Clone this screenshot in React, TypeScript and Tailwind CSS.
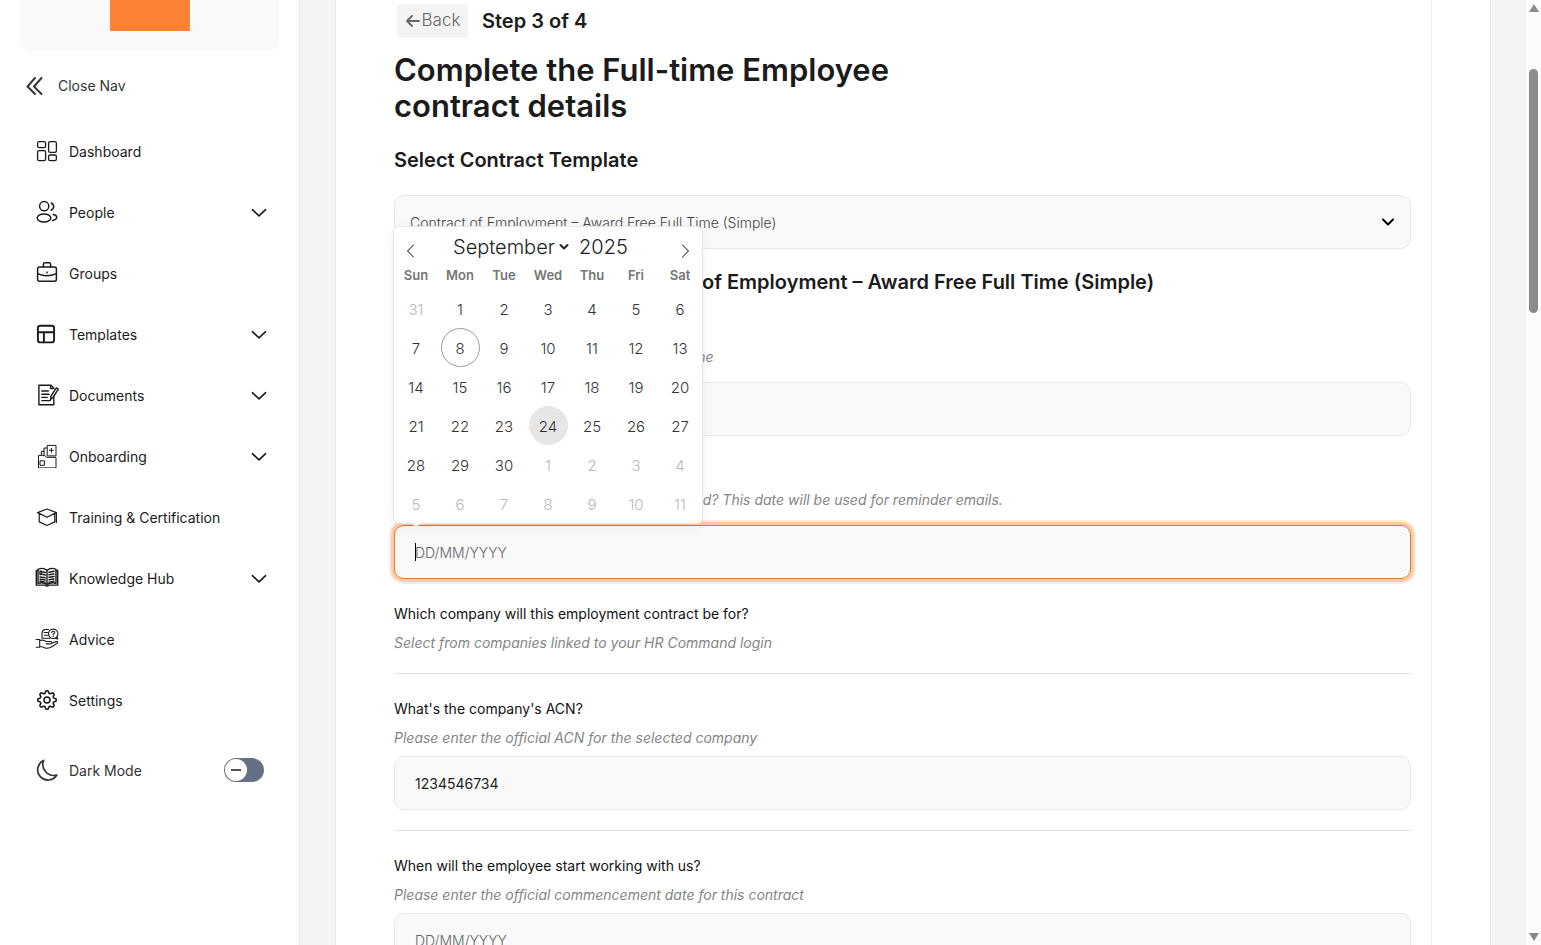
import type { ReactNode } from "react";

const line = {
  fill: "none",
  stroke: "currentColor",
  strokeLinecap: "round" as const,
  strokeLinejoin: "round" as const,
};

function Icon({ width = 1.3, children }: { width?: number; children: ReactNode }) {
  return (
    <svg className="size-6 shrink-0" viewBox="0 0 24 24" strokeWidth={width} aria-hidden="true" {...line}>
      {children}
    </svg>
  );
}

function gearPath(cx: number, cy: number, teeth: number) {
  const points: string[] = [];
  for (let i = 0; i < 160; i++) {
    const a = (i / 160) * Math.PI * 2;
    const r = 8.1 + 1.2 * Math.tanh(1.8 * Math.cos(teeth * a));
    points.push(`${(cx + r * Math.cos(a)).toFixed(2)} ${(cy + r * Math.sin(a)).toFixed(2)}`);
  }
  return `M${points.join("L")}Z`;
}

const icons: Record<string, ReactNode> = {
  Dashboard: (
    <Icon>
      <rect x="2.6" y="2.6" width="8" height="6" rx="1.6" />
      <rect x="13.6" y="2.6" width="7.8" height="10.8" rx="1.6" />
      <rect x="2.6" y="11.6" width="8" height="10" rx="1.6" />
      <rect x="13.6" y="16" width="7.8" height="5.6" rx="1.6" />
    </Icon>
  ),
  People: (
    <Icon width={1.5}>
      <circle cx="9.2" cy="6.2" r="4.6" />
      <ellipse cx="9" cy="18" rx="6.8" ry="4.1" />
      <path d="M16.2 3a3.9 3.9 0 0 1 0 7.2M18.2 14.4c4.8.9 4.8 4.8-.6 6.2" />
    </Icon>
  ),
  Groups: (
    <Icon width={1.5}>
      <rect x="2.6" y="6" width="18.8" height="14.2" rx="2" />
      <path d="M8.4 6V3.4Q8.4 1.8 10 1.8h4q1.6 0 1.6 1.6V6M2.6 12.6q9.4 4.2 18.8 0" />
      <circle cx="12" cy="11.5" r=".3" />
    </Icon>
  ),
  Templates: (
    <Icon width={1.9}>
      <rect x="2.9" y="3.8" width="16.2" height="16.6" rx="2.4" />
      <path d="M3 10.3h16M8.9 10.3v10" />
    </Icon>
  ),
  Documents: (
    <Icon width={1.4}>
      <path d="M18.8 14v7.8H3.9V2.3h12l2.9 3" />
      <path d="M15.5 2.5v3h3M6.8 8h6.5M6.8 11.2h7.2M6.8 14.4h5.5M6.8 17.6h8.5" />
      <path d="M16 13.2l5.3-8.3 2 1.3-5.3 8.3-2.4 2z" />
    </Icon>
  ),
  Onboarding: (
    <Icon width={1}>
      <path d="M3.5 23.5V11.3h6.2l1.8 2h9.5v10.2zM5.4 16.8h4v4.5h-4zM12.2 11.5V1.4h8.8v10.1zM16.4 4.3v4M14.4 6.3h4M12 4H9v7.3M9 7.3H6.3v4" />
    </Icon>
  ),
  "Training & Certification": (
    <Icon width={1.2}>
      <path d="M12 4l9.4 3.6-9.4 4.7-9.4-4.7zM4.2 8.8v8.1l7.8 3.6 7.8-3.6V8.8M21.4 7.6v9.8" />
    </Icon>
  ),
  "Knowledge Hub": (
    <Icon width={1.4}>
      <path d="M3 3.3C6 1.9 9.5 2.2 12 4.4c2.5-2.2 6-2.5 9-1.1v14c-3-.8-6.5-.6-9 1.2-2.5-1.8-6-2-9-1.2zM12 4.4v14" />
      <path d="M3 4.5H1.3v14.6h8.5q2.2 2 4.4 0h8.5V4.5H21M5 5.3h1.8v3.2H5zM8.3 6l2 .5M8.3 8.5l2 .5M5 11l5.2.8M5 13.2l5.2.8M5 15.3l5.2.8M19 5.3l-5 1M19 8l-5 .8M19 10.5l-5 .8M19 13l-5 .8M19 15.3l-5 .8" />
    </Icon>
  ),
  Advice: (
    <Icon width={1.1}>
      <circle cx="18.2" cy="6.8" r="4.7" />
      <path d="M22 10l.8 2-2.5-.8M13.5 2.5H10q-3 .8-3 4v4.8h8M9.2 5.5h3.5M9.2 8.3h3.5M16.7 5.6q.2-1.4 1.5-1.4 1.6 0 1.5 1.4 0 .8-1.5 1.5v.9M18.2 9.3v.2" />
      <path d="M1.2 12.5h3.5v7.8H1.2M4.7 13.6c3-1.2 4.6-.5 6.5.9h4.2q1.6.2 1.4 1.4-.2 1-1.6 1h-4M16.6 16l5-1.4q1.5.1.9 1.5L15.8 20.2q-3.3 1.8-6.3.6l-2.3-1H4.7" />
    </Icon>
  ),
  Settings: (
    <Icon width={1.6}>
      <path d={gearPath(12, 12, 8)} />
      <circle cx="12" cy="12" r="3" />
    </Icon>
  ),
};

const nav = [
  { name: "Dashboard" },
  { name: "People", menu: true },
  { name: "Groups" },
  { name: "Templates", menu: true },
  { name: "Documents", menu: true },
  { name: "Onboarding", menu: true },
  { name: "Training & Certification" },
  { name: "Knowledge Hub", menu: true },
  { name: "Advice" },
  { name: "Settings" },
];

function Sidebar() {
  return (
    <aside className="w-[300px] shrink-0 border-r border-[#e6e6e6] bg-white px-5 text-[#1b1b1b]">
      <div className="flex justify-center rounded-b-[10px] bg-[#f9f9f9] pb-5">
        <div className="h-[31px] w-20 bg-[#ff8133]" />
      </div>
      <button className="mt-[22px] flex h-6 items-center gap-[14px] pl-1 text-[14px] text-[#333]">
        <svg className="size-5" viewBox="0 0 20 20" strokeWidth="1.9" aria-hidden="true" {...line}>
          <path d="M11 3L3.5 11.5 11 19M17.5 3L10 11.5l7.5 7.5" />
        </svg>
        Close Nav
      </button>
      <nav className="mt-6">
        <ul className="flex flex-col gap-px">
          {nav.map((item) => (
            <li key={item.name}>
              <a href="#" className="flex h-[60px] items-center gap-[10px] pr-3 pl-[15px] text-[14px]">
                {icons[item.name]}
                <span className="flex-1">{item.name}</span>
                {item.menu && (
                  <svg className="h-4 w-4" viewBox="0 0 16 16" strokeWidth="1.6" aria-hidden="true" {...line}>
                    <path d="M1.4 5.7L8 11.9l6.6-6.2" />
                  </svg>
                )}
              </a>
            </li>
          ))}
        </ul>
      </nav>
      <label className="mt-7 flex h-6 items-center gap-[10px] pr-[15px] pl-[15px] text-[14px] text-[#333]">
        <Icon width={1.7}>
          <path d="M8.6 2.4A10.3 10.3 0 1 0 21.800 17 11 11 0 0 1 8.6 2.4Z" />
        </Icon>
        <span className="flex-1">Dark Mode</span>
        <input type="checkbox" role="switch" className="peer sr-only" />
        <span className="flex h-6 w-10 rounded-full bg-[#667085] p-px peer-checked:justify-end">
          <span className="flex size-[22px] items-center justify-center rounded-full bg-white">
            <span className="h-[2px] w-[10px] bg-[#555]" />
          </span>
        </span>
      </label>
    </aside>
  );
}

const weekdays = ["Sun", "Mon", "Tue", "Wed", "Thu", "Fri", "Sat"];
const days = [
  { n: 31, other: true },
  ...Array.from({ length: 30 }, (_, i) => ({ n: i + 1, other: false })),
  ...Array.from({ length: 11 }, (_, i) => ({ n: i + 1, other: true })),
];

function dayClass(day: { n: number; other: boolean }) {
  if (day.other) return "border-transparent text-[#b8b8b8]";
  if (day.n === 8) return "border-[#959ea9] text-[#333]";
  if (day.n === 24) return "border-[#e6e6e6] bg-[#e6e6e6] text-[#333]";
  return "border-transparent text-[#333]";
}

function Calendar() {
  return (
    <div className="absolute bottom-full left-0 z-10 mb-[2px] w-[308px] rounded-[5px] bg-white shadow-[0_0_0_1px_#e6e6e6,0_3px_13px_rgba(0,0,0,0.08)]">
      <div className="flex h-[34px] items-center justify-between px-[10px]">
        <button aria-label="Previous month" className="pt-[14px]">
          <svg className="h-[14px] w-[14px]" viewBox="0 0 14 14" strokeWidth="1" aria-hidden="true" {...line}>
            <path d="M9.5 1L3.5 7l6 6" />
          </svg>
        </button>
        <div className="flex items-center gap-[10px] pt-[6px] text-[20px] font-light text-[#222]">
          <div className="relative">
            <select aria-label="Month" defaultValue="September" className="appearance-none pr-[14px]">
              <option>September</option>
              <option>October</option>
            </select>
            <svg className="pointer-events-none absolute top-[11px] right-0 h-2 w-[10px]" viewBox="0 0 10 8" strokeWidth="2" aria-hidden="true" {...line}>
              <path d="M1.5 2L5 5.5 8.5 2" />
            </svg>
          </div>
          <input aria-label="Year" defaultValue="2025" className="w-16 bg-transparent" />
        </div>
        <button aria-label="Next month" className="pt-[14px]">
          <svg className="h-[14px] w-[14px]" viewBox="0 0 14 14" strokeWidth="1" aria-hidden="true" {...line}>
            <path d="M4.5 1l6 6-6 6" />
          </svg>
        </button>
      </div>
      <div className="grid h-7 grid-cols-7 items-center pt-[2px] text-center text-[13px] font-semibold text-[#757575]">
        {weekdays.map((d) => (
          <span key={d}>{d}</span>
        ))}
      </div>
      <div className="grid grid-cols-7 justify-items-center">
        {days.map((day, i) => (
          <button key={i} className={`size-[39px] rounded-full border pt-[3px] text-[15px] font-light ${dayClass(day)}`}>
            {day.n}
          </button>
        ))}
      </div>
      <span className="absolute top-full left-[17px] border-x-[5px] border-t-[4px] border-x-transparent border-t-white" />
    </div>
  );
}

const box = "h-[54px] w-full rounded-[10px] border bg-[#f9f9f9] px-5 text-[14px] text-[#222] outline-none placeholder:font-light placeholder:text-[#666]";

type FieldProps = {
  id: string;
  label: string;
  hint: string;
  value?: string;
  placeholder?: string;
  active?: boolean;
  input?: boolean;
  spaced?: boolean;
};

function Field({ id, label, hint, value, placeholder, active, input = true, spaced }: FieldProps) {
  return (
    <div>
      <label htmlFor={input ? id : undefined} className="block text-[14px] leading-6 text-[#111]">
        {label}
      </label>
      <p className="mt-[5px] text-[14px] leading-6 text-[#858585] italic">{hint}</p>
      {input && (
        <div className={`relative ${spaced ? "mt-[13px]" : "mt-[6px]"}`}>
          <input
            id={id}
            defaultValue={value}
            placeholder={placeholder}
            className={`${box} ${active ? "border-[#de7c3c] shadow-[0_0_0_3px_#ffcba6,0_0_0_5px_#ffeadb]" : "border-[#e9e9e9]"}`}
          />
          {active && <span className="absolute top-[18px] left-[21px] h-[18px] w-px bg-black" />}
          {active && <Calendar />}
        </div>
      )}
    </div>
  );
}

export default function App() {
  return (
    <div className="flex h-screen overflow-hidden bg-[#f4f4f4] font-['Inter','Liberation_Sans',sans-serif]">
      <Sidebar />
      <main className="min-w-0 flex-1 px-[35px]">
        <div className="min-h-full border-x border-[#e9e9e9] bg-white pr-[58px] pl-[58px]">
          <div className="border-r border-[#ececec] pt-1 pr-5">
            <div className="flex items-center gap-[14px] pl-[3px]">
              <button className="flex h-[34px] w-[71px] items-center justify-center gap-px rounded-[4px] bg-[#f4f4f4] text-[17px] font-light text-[#666]">
                <svg className="h-4 w-4" viewBox="0 0 16 16" strokeWidth="1.8" aria-hidden="true" {...line}>
                  <path d="M14 8H2M7 3L2 8l5 5" />
                </svg>
                Back
              </button>
              <span className="text-[20px] font-semibold text-[#1b1b1b]">Step 3 of 4</span>
            </div>
            <h1 className="mt-[14px] max-w-[560px] text-[31px] leading-9 font-semibold text-[#1b1b1b]">
              Complete the Full-time Employee
              <br />
              contract details
            </h1>
            <h2 className="mt-[22px] text-[20px] leading-7 font-semibold text-[#1b1b1b]">Select Contract Template</h2>
            <div className="relative mt-[21px]">
              <select aria-label="Contract template" className="h-[54px] w-full appearance-none rounded-[10px] border border-[#e9e9e9] bg-[#f9f9f9] px-[15px] text-[14px] font-light text-[#444]">
                <option>Contract of Employment – Award Free Full Time (Simple)</option>
              </select>
              <svg className="pointer-events-none absolute top-[19px] right-[15px] h-4 w-4" viewBox="0 0 16 16" strokeWidth="2" aria-hidden="true" {...line}>
                <path d="M3 5.5L8 10.5l5-5" />
              </svg>
            </div>
            <h2 className="mt-[19px] flex text-[20px] leading-7 font-semibold text-[#1b1b1b]">
              <span className="w-[308px] shrink-0">Your Template: Contract</span>
              <span>of Employment – Award Free Full Time (Simple)</span>
            </h2>
            <div className="mt-5">
              <Field id="name" label="What's the employee's name?" hint="Please enter the new employee's full legal name" spaced />
            </div>
            <div className="mt-[23px]">
              <Field
                id="reminder"
                label="Reminder date"
                hint="When would this contract need to be completed? This date will be used for reminder emails."
                placeholder="DD/MM/YYYY"
                active
                spaced
              />
            </div>
            <div className="mt-[23px] border-b border-[#e2e2e2] pb-[18px]">
              <Field id="company" label="Which company will this employment contract be for?" hint="Select from companies linked to your HR Command login" input={false} />
            </div>
            <div className="mt-[23px] border-b border-[#e2e2e2] pb-5">
              <Field id="acn" label="What's the company's ACN?" hint="Please enter the official ACN for the selected company" value="1234546734" />
            </div>
            <div className="mt-[23px]">
              <Field id="start" label="When will the employee start working with us?" hint="Please enter the official commencement date for this contract" placeholder="DD/MM/YYYY" />
            </div>
          </div>
        </div>
      </main>
      <div className="flex w-[15px] shrink-0 flex-col items-center bg-[#fbfbfb] pt-1 pb-1" aria-hidden="true">
        <span className="border-x-[5px] border-b-[8px] border-x-transparent border-b-[#8b8b8b]" />
        <span className="mt-[57px] h-[26%] w-[9px] rounded-full bg-[#8b8b8b]" />
        <span className="mt-auto border-x-[5px] border-t-[8px] border-x-transparent border-t-[#8b8b8b]" />
      </div>
    </div>
  );
}
